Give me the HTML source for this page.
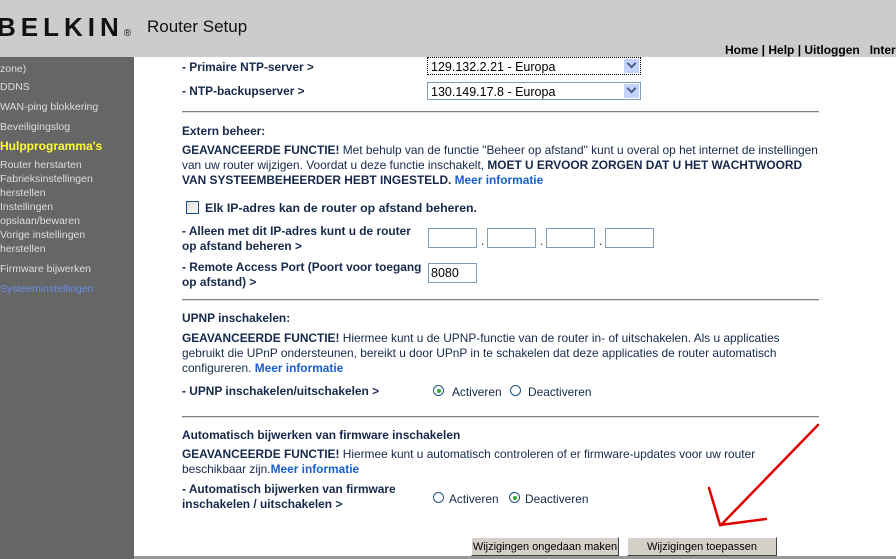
<!DOCTYPE html><html><head><style>
body{margin:0;width:896px;height:559px;overflow:hidden;background:#fff;font-family:"Liberation Sans",Arial,sans-serif;position:relative}
.a{position:absolute;white-space:nowrap}
.t{font-size:11.9px;color:#16294a;line-height:15px}
.b{font-weight:bold}
.l{color:#1a5fd0;font-weight:bold}
.s{font-size:10.5px;color:#ddd}
.hr{position:absolute;left:182px;width:637px;height:1px;background:#808080;border-bottom:1px solid #ddd}
.sel{position:absolute;left:427px;width:214px;height:18px;border:1px solid #7f9db9;font-size:12.5px;line-height:18px;box-sizing:border-box;padding-left:3px;color:#000}
.sel:after{content:"";position:absolute;right:1px;top:1px;width:15px;height:14px;background:#c3d3fd;border:0}
.sel i{position:absolute;right:5px;width:5px;height:5px;border-right:2px solid #4d6185;border-bottom:2px solid #4d6185;transform:rotate(45deg);z-index:2;top:2px}
.in{position:absolute;width:49px;height:20px;border:1px solid #7f9db9;box-sizing:border-box}
.r{position:absolute;width:11px;height:11px;border:1px solid #1c5180;border-radius:50%;background:#fff;box-sizing:border-box}
.r.on:after{content:"";position:absolute;left:2.5px;top:2.5px;width:4px;height:4px;border-radius:50%;background:#2eaa2e}
.btn{position:absolute;height:19px;background:#d4d0c8;border:1px solid;border-color:#fff #404040 #404040 #fff;font-size:11px;line-height:18px;text-align:center;color:#000;box-sizing:border-box}
</style></head><body>
<div class="a" style="left:0;top:0;width:896px;height:57px;background:#cccccc"></div>
<div class="a" style="left:-3px;top:12px;font-size:26px;font-weight:bold;letter-spacing:5px;color:#111">BELKIN<span style="font-size:10px;letter-spacing:0;font-weight:normal">®</span></div>
<div class="a" style="left:147px;top:17px;font-size:17px;color:#111">Router Setup</div>
<div class="a" style="left:725px;top:43px;font-size:12px;font-weight:bold;color:#000">Home | Help | Uitloggen &nbsp;&nbsp;Intern</div>
<div class="a" style="left:0;top:57px;width:134px;height:502px;background:#666666"></div>
<div class="a s" style="left:0;top:62px;line-height:14px">zone)<br><div style="margin-top:4px">DDNS</div><div style="margin-top:6px">WAN-ping blokkering</div><div style="margin-top:6px">Beveiligingslog</div></div>
<div class="a" style="left:0;top:139px;font-size:12px;font-weight:bold;color:#ffff33">Hulpprogramma's</div>
<div class="a s" style="left:0;top:158px;line-height:14px">Router herstarten<br>Fabrieksinstellingen<br>herstellen<br>Instellingen<br>opslaan/bewaren<br>Vorige instellingen<br>herstellen</div>
<div class="a s" style="left:0;top:263px">Firmware bijwerken</div>
<div class="a s" style="left:0;top:283px;color:#6b8de8">Systeeminstellingen</div>

<div class="a t b" style="left:182px;top:60px">- Primaire NTP-server &gt;</div>
<div class="sel" style="top:57px;border:1px dotted #000">129.132.2.21 - Europa<i></i></div>
<div class="a t b" style="left:182px;top:84px">- NTP-backupserver &gt;</div>
<div class="sel" style="top:82px">130.149.17.8 - Europa<i></i></div>
<div class="hr" style="top:111px"></div>
<div class="a t b" style="left:182px;top:124px">Extern beheer:</div>
<div class="a t" style="left:182px;top:143px"><b>GEAVANCEERDE FUNCTIE!</b> Met behulp van de functie "Beheer op afstand" kunt u overal op het internet de instellingen<br>van uw router wijzigen. Voordat u deze functie inschakelt, <b>MOET U ERVOOR ZORGEN DAT U HET WACHTWOORD</b><br><b>VAN SYSTEEMBEHEERDER HEBT INGESTELD.</b> <span class="l">Meer informatie</span></div>
<div class="a" style="left:186px;top:201px;width:13px;height:13px;border:1px solid #1c5180;background:linear-gradient(135deg,#dcdcd6,#fff);box-sizing:border-box"></div>
<div class="a t b" style="left:205px;top:201px;font-size:12.3px">Elk IP-adres kan de router op afstand beheren.</div>
<div class="a t b" style="left:182px;top:224px">- Alleen met dit IP-adres kunt u de router<br>op afstand beheren &gt;</div>
<div class="in" style="left:428px;top:228px"></div><div class="a t" style="left:481px;top:234px">.</div>
<div class="in" style="left:487px;top:228px"></div><div class="a t" style="left:540px;top:234px">.</div>
<div class="in" style="left:546px;top:228px"></div><div class="a t" style="left:599px;top:234px">.</div>
<div class="in" style="left:605px;top:228px"></div>
<div class="a t b" style="left:182px;top:260px">- Remote Access Port (Poort voor toegang<br>op afstand) &gt;</div>
<div class="in" style="left:428px;top:263px;font-size:12.5px;padding:2px 2px">8080</div>
<div class="hr" style="top:299px"></div>
<div class="a t b" style="left:182px;top:311px">UPNP inschakelen:</div>
<div class="a t" style="left:182px;top:331px"><b>GEAVANCEERDE FUNCTIE!</b> Hiermee kunt u de UPNP-functie van de router in- of uitschakelen. Als u applicaties<br>gebruikt die UPnP ondersteunen, bereikt u door UPnP in te schakelen dat deze applicaties de router automatisch<br>configureren. <span class="l">Meer informatie</span></div>
<div class="a t b" style="left:182px;top:384px">- UPNP inschakelen/uitschakelen &gt;</div>
<div class="r on" style="left:433px;top:385px"></div><div class="a t" style="left:452px;top:385px">Activeren</div>
<div class="r" style="left:510px;top:385px"></div><div class="a t" style="left:528px;top:385px">Deactiveren</div>
<div class="hr" style="top:416px"></div>
<div class="a t b" style="left:182px;top:428px">Automatisch bijwerken van firmware inschakelen</div>
<div class="a t" style="left:182px;top:447px"><b>GEAVANCEERDE FUNCTIE!</b> Hiermee kunt u automatisch controleren of er firmware-updates voor uw router<br>beschikbaar zijn.<span class="l">Meer informatie</span></div>
<div class="a t b" style="left:182px;top:482px">- Automatisch bijwerken van firmware<br>inschakelen / uitschakelen &gt;</div>
<div class="r" style="left:433px;top:492px"></div><div class="a t" style="left:449px;top:492px">Activeren</div>
<div class="r on" style="left:509px;top:492px"></div><div class="a t" style="left:525px;top:492px">Deactiveren</div>
<div class="btn" style="left:471px;top:537px;width:148px">Wijzigingen ongedaan maken</div>
<div class="btn" style="left:627px;top:537px;width:150px">Wijzigingen toepassen</div>
<div class="a" style="left:134px;top:556px;width:762px;height:3px;background:#999"></div>
<svg class="a" style="left:0;top:0" width="896" height="559"><g stroke="#e00000" stroke-width="2.5" fill="none" stroke-linecap="round"><path d="M818 425 L721 525"/><path d="M709 488 L720 525 L766 519"/></g></svg>
</body></html>
